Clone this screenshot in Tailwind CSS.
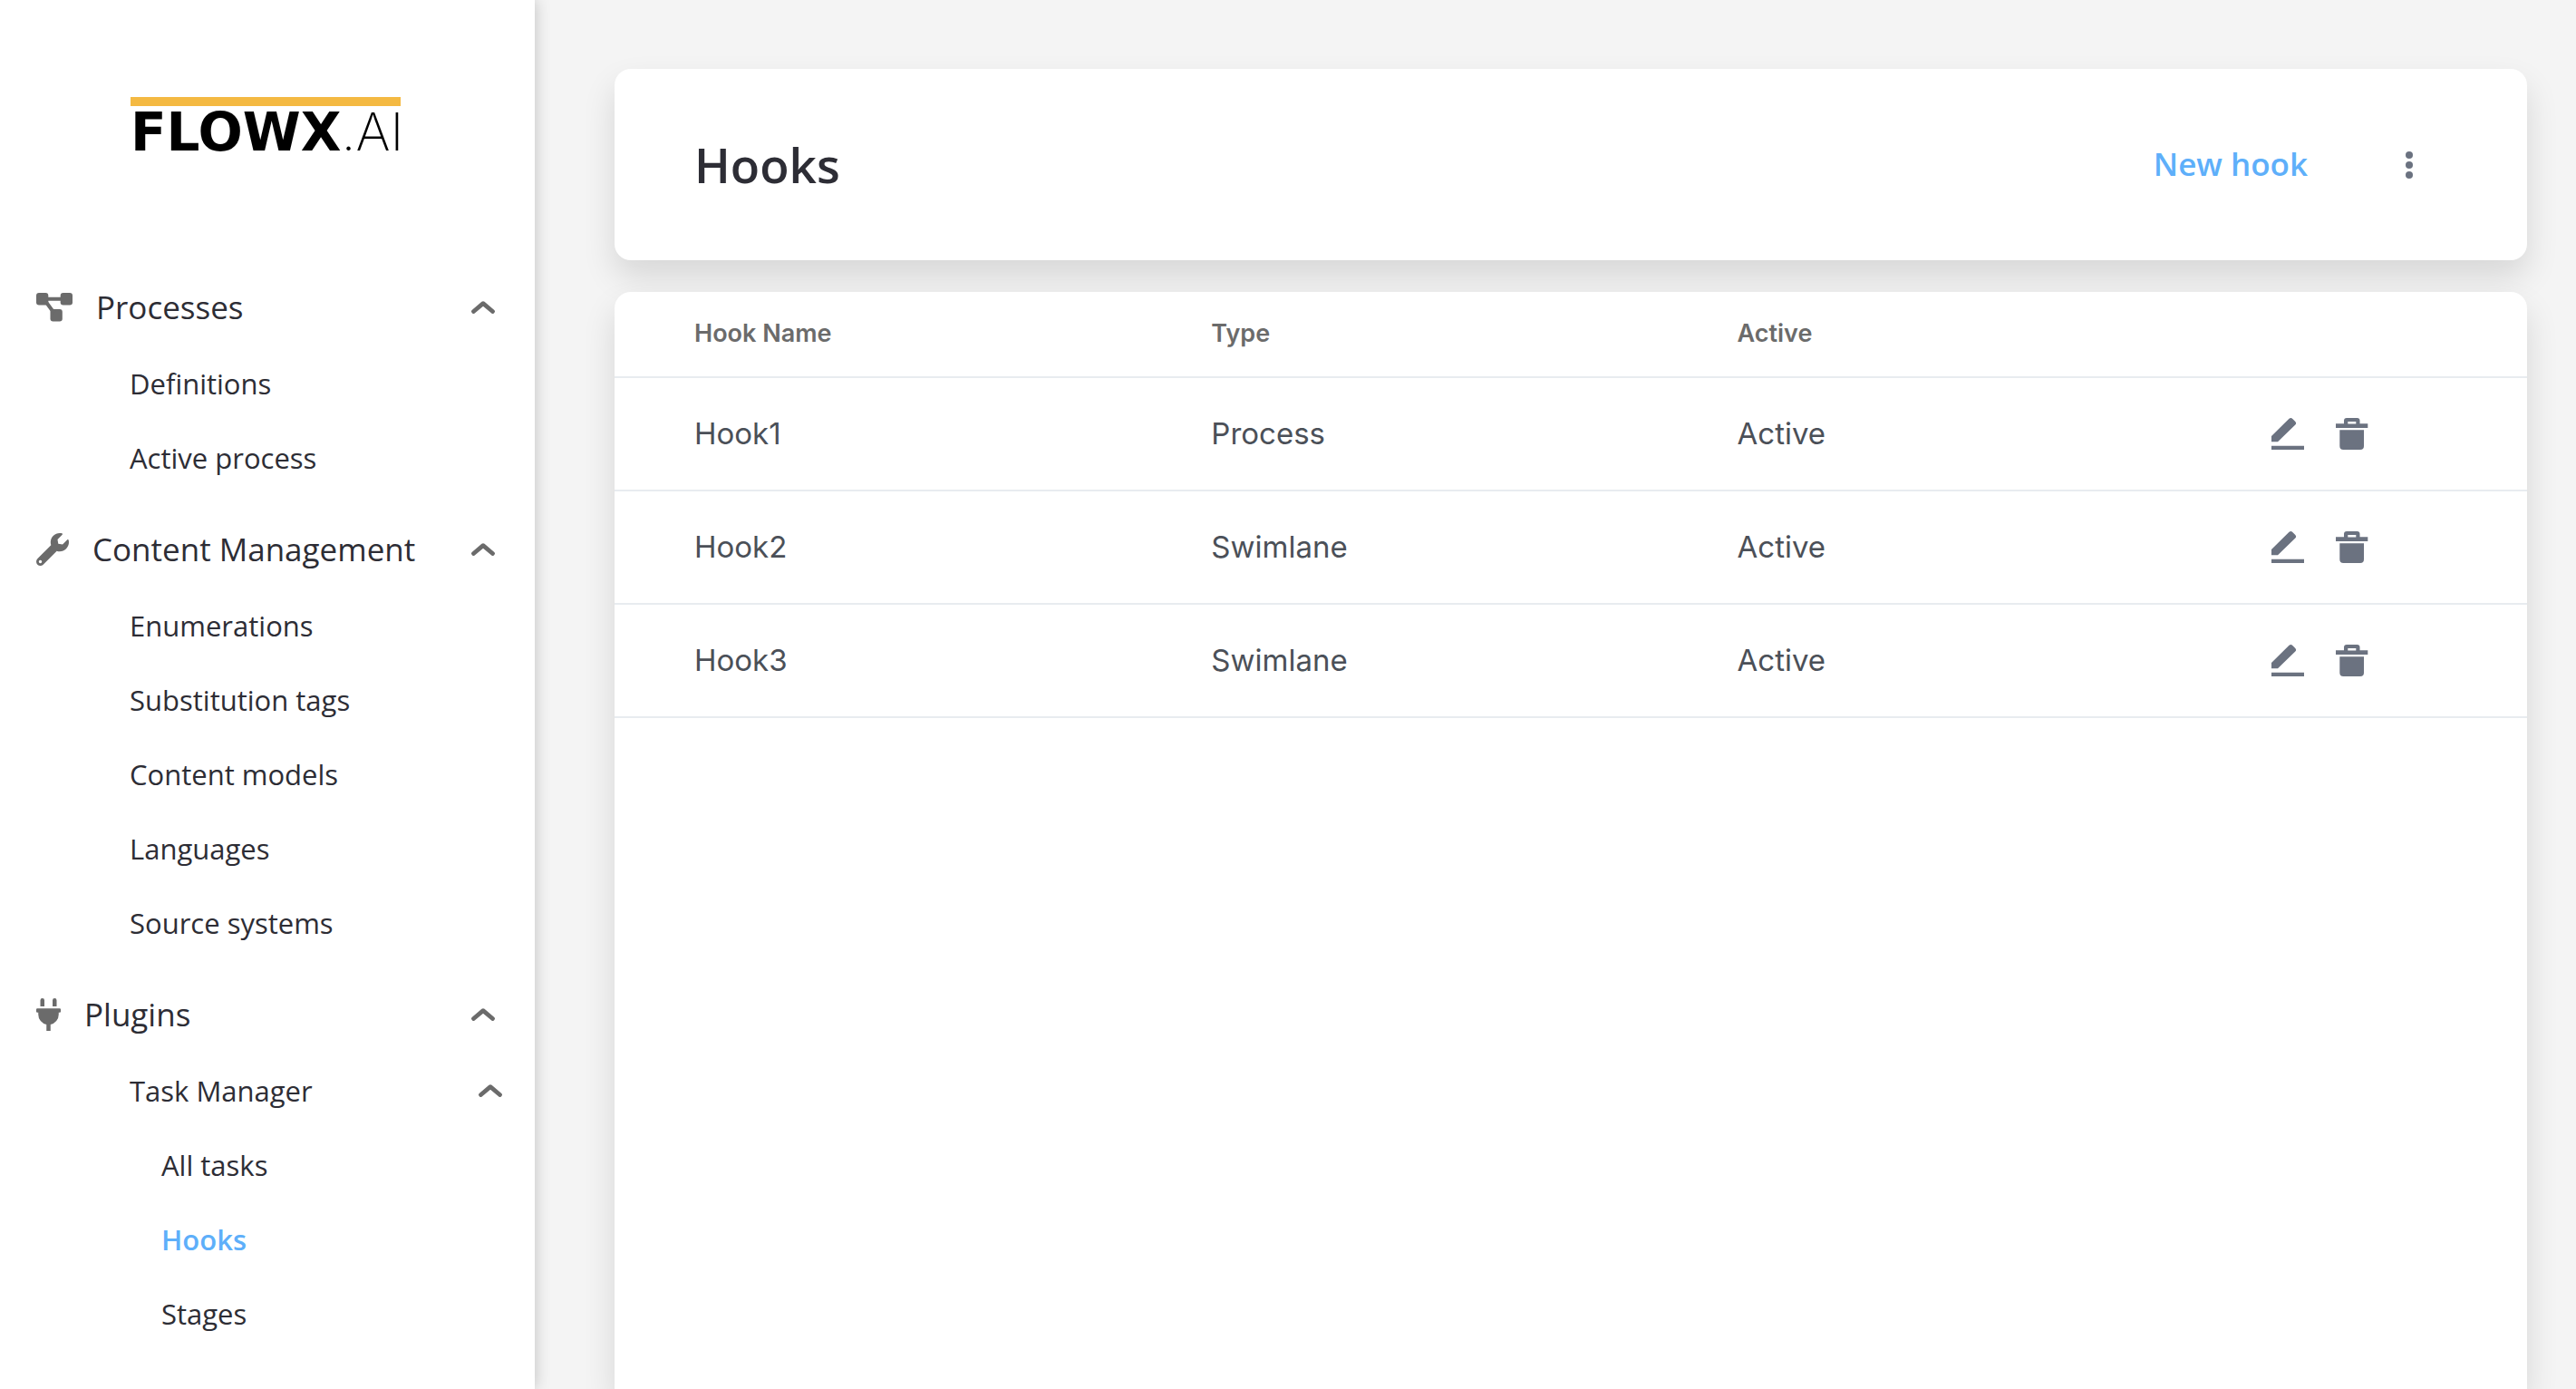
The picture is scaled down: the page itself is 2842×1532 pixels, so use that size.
<!DOCTYPE html>
<html lang="en">
<head>
<meta charset="utf-8">
<title>FLOWX.AI – Hooks</title>
<script src="https://cdn.jsdelivr.net/npm/@tailwindcss/browser@4"></script>
</head>
<body class="bg-[#f4f4f4] text-[#2d2d35] font-['Open_Sans',sans-serif]">
<svg class="hidden" aria-hidden="true">
  <symbol id="chevron" viewBox="0 0 26 14"><path d="M2.500 11.500 13 2.700 23.500 11.500" fill="none" stroke="currentColor" stroke-width="4.800" stroke-linecap="round" stroke-linejoin="round"/></symbol>
  <symbol id="edit" viewBox="0 0 36 36"><path d="M0 20 19.500.8Q21.500-.8 23.300.9L26.300 3.900Q28 5.800 26.300 7.500L7 26.200H0ZM0 30.700h36V35H0Z" fill="currentColor"/></symbol>
  <symbol id="trash" viewBox="0 0 36 36"><path fill-rule="evenodd" d="M0 6.200H9V3Q9 0 12 0H23.500Q26.500 0 26.500 3V6.200H35.300V11H0ZM13.300 4V6.500H22.300V4ZM4.300 13.300H31V31Q31 35 27 35H8.300Q4.300 35 4.300 31Z" fill="currentColor"/></symbol>
</svg>
<div class="flex min-h-screen">
  <aside class="relative z-10 w-[590px] shrink-0 bg-white shadow-[0_0_16px_rgba(0,0,0,0.22)]">
    <a href="#" aria-label="FLOWX.AI" class="mx-36 mt-[107px] block h-[189px] w-[298px] text-black">
      <span class="block h-[10px] bg-[#f4b942]"></span>
      <span class="flex items-baseline justify-between text-[58px] leading-[56px]">
        <span class="font-['DejaVu_Sans',sans-serif] font-bold">FLOWX</span>
        <span class="font-['Inter',sans-serif] font-extralight">.AI</span>
      </span>
    </a>
    <nav aria-label="Main" class="flex flex-col gap-[17px] text-[31px]">
      <section>
        <button type="button" aria-expanded="true" class="flex h-[86px] w-full items-center pr-11 pl-10 text-[35px]">
          <svg class="mr-[26px] h-8 w-10 text-[#6b6b6b]" viewBox="0 0 40 32" fill="currentColor"><rect width="13.300" height="13.500" rx="3"/><rect x="26.700" width="13.300" height="13.500" rx="3"/><rect x="15.500" y="18" width="13.300" height="13.500" rx="3"/><path d="M12 6.800H28M10 9 19.500 22" stroke="currentColor" stroke-width="4"/></svg>
          Processes
          <svg class="ml-auto h-[14px] w-[26px] text-[#6b6b6b]"><use href="#chevron"/></svg>
        </button>
        <ul>
          <li><a href="#" class="flex h-[82px] items-center pl-[143px]">Definitions</a></li>
          <li><a href="#" class="flex h-[82px] items-center pl-[143px]">Active process</a></li>
        </ul>
      </section>
      <section>
        <button type="button" aria-expanded="true" class="flex h-[86px] w-full items-center pr-11 pl-10 text-[35px]">
          <svg class="mr-[26px] size-9 text-[#6b6b6b]" viewBox="0 0 512 512" fill="currentColor"><path d="M507.730 109.100c-2.240-9.030-13.540-12.090-20.120-5.510l-74.360 74.360-67.880-11.310-11.310-67.880 74.360-74.360c6.620-6.620 3.430-17.900-5.660-20.160-47.380-11.740-99.550.91-136.580 37.930-39.640 39.640-50.550 97.100-34.050 147.200L18.740 402.760c-24.990 24.990-24.990 65.510 0 90.500 24.990 24.990 65.510 24.990 90.500 0l213.210-213.210c50.120 16.710 107.470 5.680 147.370-34.220 37.070-37.070 49.700-89.320 37.910-136.730zM64 472c-13.250 0-24-10.750-24-24 0-13.260 10.750-24 24-24s24 10.740 24 24c0 13.250-10.750 24-24 24z"/></svg>
          Content Management
          <svg class="ml-auto h-[14px] w-[26px] text-[#6b6b6b]"><use href="#chevron"/></svg>
        </button>
        <ul>
          <li><a href="#" class="flex h-[82px] items-center pl-[143px]">Enumerations</a></li>
          <li><a href="#" class="flex h-[82px] items-center pl-[143px]">Substitution tags</a></li>
          <li><a href="#" class="flex h-[82px] items-center pl-[143px]">Content models</a></li>
          <li><a href="#" class="flex h-[82px] items-center pl-[143px]">Languages</a></li>
          <li><a href="#" class="flex h-[82px] items-center pl-[143px]">Source systems</a></li>
        </ul>
      </section>
      <section>
        <button type="button" aria-expanded="true" class="flex h-[86px] w-full items-center pr-11 pl-10 text-[35px]">
          <svg class="mr-[26px] h-9 w-[27px] text-[#6b6b6b]" viewBox="0 0 384 512" fill="currentColor"><path d="M320,32a32,32,0,0,0-64,0v96h64Zm48,128H16A16,16,0,0,0,0,176v32a16,16,0,0,0,16,16H32v32A160.070,160.070,0,0,0,160,412.800V512h64V412.800A160.070,160.070,0,0,0,352,256V224h16a16,16,0,0,0,16-16V176A16,16,0,0,0,368,160ZM128,32a32,32,0,0,0-64,0v96h64Z"/></svg>
          Plugins
          <svg class="ml-auto h-[14px] w-[26px] text-[#6b6b6b]"><use href="#chevron"/></svg>
        </button>
        <button type="button" aria-expanded="true" class="flex h-[82px] w-full items-center justify-between pr-9 pl-[143px]">
          Task Manager
          <svg class="h-[14px] w-[26px] text-[#6b6b6b]"><use href="#chevron"/></svg>
        </button>
        <ul>
          <li><a href="#" class="flex h-[82px] items-center pl-[178px]">All tasks</a></li>
          <li><a href="#" aria-current="page" class="flex h-[82px] items-center pl-[178px] font-semibold text-[#5eaffa]">Hooks</a></li>
          <li><a href="#" class="flex h-[82px] items-center pl-[178px]">Stages</a></li>
        </ul>
      </section>
    </nav>
  </aside>

  <main class="flex min-w-0 flex-1 flex-col gap-[35px] pt-[76px] pr-[54px] pl-[88px]">
    <header class="flex h-[211px] items-center rounded-[18px] bg-white pr-[118px] pl-[88px] shadow-[0_18px_36px_rgba(0,0,0,0.12)]">
      <h1 class="text-[53px] font-semibold">Hooks</h1>
      <button type="button" class="mr-[100px] ml-auto text-[35px] font-semibold text-[#5eaffa]">New hook</button>
      <button type="button" aria-label="More options" class="text-[#6b7280]">
        <svg class="h-[30px] w-6" viewBox="0 0 24 30" fill="currentColor"><circle cx="12" cy="4" r="4"/><circle cx="12" cy="15" r="4"/><circle cx="12" cy="26" r="4"/></svg>
      </button>
    </header>
    <div class="flex-1 rounded-t-[18px] bg-white shadow-[0_18px_36px_rgba(0,0,0,0.12)]">
      <table class="w-full table-fixed text-left font-['Inter',sans-serif] text-[33px] text-[#4b5058]">
        <thead class="text-[27px] text-[#6b6b6b]">
          <tr class="h-[94px] border-b-2 border-[#e8ecf0]">
            <th scope="col" class="w-[31.2%] pl-[88px] font-semibold">Hook Name</th>
            <th scope="col" class="w-[27.5%] font-semibold">Type</th>
            <th scope="col" class="font-semibold">Active</th>
            <td></td>
          </tr>
        </thead>
        <tbody>
          <tr class="h-[125px] border-b-2 border-[#e8ecf0]">
            <td class="pl-[88px]">Hook1</td><td>Process</td><td>Active</td>
            <td><div class="flex justify-end gap-[35px] pr-[175px] text-[#6b7280]">
              <button type="button" aria-label="Edit Hook1"><svg class="size-9"><use href="#edit"/></svg></button>
              <button type="button" aria-label="Delete Hook1"><svg class="size-9"><use href="#trash"/></svg></button>
            </div></td>
          </tr>
          <tr class="h-[125px] border-b-2 border-[#e8ecf0]">
            <td class="pl-[88px]">Hook2</td><td>Swimlane</td><td>Active</td>
            <td><div class="flex justify-end gap-[35px] pr-[175px] text-[#6b7280]">
              <button type="button" aria-label="Edit Hook2"><svg class="size-9"><use href="#edit"/></svg></button>
              <button type="button" aria-label="Delete Hook2"><svg class="size-9"><use href="#trash"/></svg></button>
            </div></td>
          </tr>
          <tr class="h-[125px] border-b-2 border-[#e8ecf0]">
            <td class="pl-[88px]">Hook3</td><td>Swimlane</td><td>Active</td>
            <td><div class="flex justify-end gap-[35px] pr-[175px] text-[#6b7280]">
              <button type="button" aria-label="Edit Hook3"><svg class="size-9"><use href="#edit"/></svg></button>
              <button type="button" aria-label="Delete Hook3"><svg class="size-9"><use href="#trash"/></svg></button>
            </div></td>
          </tr>
        </tbody>
      </table>
    </div>
  </main>
</div>
</body>
</html>
